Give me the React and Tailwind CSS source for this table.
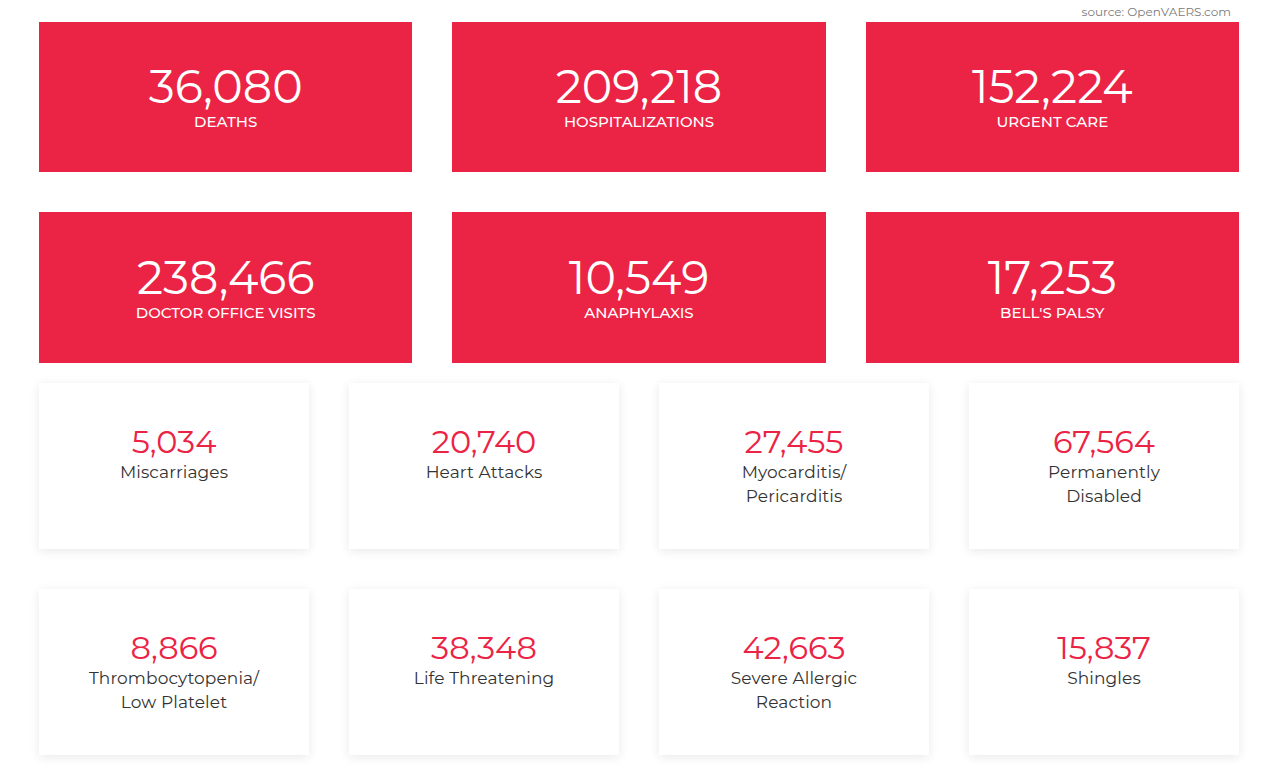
export default function App() {
  const red = [
    ["36,080", "DEATHS"],
    ["209,218", "HOSPITALIZATIONS"],
    ["152,224", "URGENT CARE"],
    ["238,466", "DOCTOR OFFICE VISITS"],
    ["10,549", "ANAPHYLAXIS"],
    ["17,253", "BELL'S PALSY"],
  ];
  const white = [
    ["5,034", ["Miscarriages"]],
    ["20,740", ["Heart Attacks"]],
    ["27,455", ["Myocarditis/", "Pericarditis"]],
    ["67,564", ["Permanently", "Disabled"]],
    ["8,866", ["Thrombocytopenia/", "Low Platelet"]],
    ["38,348", ["Life Threatening"]],
    ["42,663", ["Severe Allergic", "Reaction"]],
    ["15,837", ["Shingles"]],
  ];
  return (
    <div className="min-h-[776px] bg-white" style={{ fontFamily: "Montserrat, Inter, 'Open Sans', sans-serif" }}>
      <div className="ml-[39px] w-[1200px]">
        <div className="h-[22px] pr-[8px] text-right text-[12px] leading-[24px] text-[#7a7a7a]">
          source: OpenVAERS.com
        </div>
        <div className="grid grid-cols-3 gap-x-10">
          {red.slice(0, 3).map(([n, l]) => (
            <RedCard key={l} n={n} l={l} h="h-[150px]" />
          ))}
        </div>
        <div className="mt-10 grid grid-cols-3 gap-x-10">
          {red.slice(3).map(([n, l]) => (
            <RedCard key={l} n={n} l={l} h="h-[151px]" />
          ))}
        </div>
        <div className="mt-5 grid grid-cols-4 gap-10">
          {white.map(([n, ls]) => (
            <div
              key={n}
              className="flex h-[166px] flex-col items-center bg-white pt-[43px] text-center shadow-[0_2px_10px_rgba(0,0,0,0.09)]"
            >
              <div className="text-[32px] leading-[32px] text-[#eb2344]">{n}</div>
              <div className="mt-[2px] text-[17px] leading-[24px] tracking-[0.1px] text-[#333333]">
                {ls.map((x) => (
                  <div key={x}>{x}</div>
                ))}
              </div>
            </div>
          ))}
        </div>
      </div>
    </div>
  );
}

function RedCard({ n, l, h }) {
  return (
    <div className={`${h} flex flex-col items-center justify-center bg-[#eb2344] pt-[2px] text-white`}>
      <div className="text-[46px] leading-[46px]">{n}</div>
      <div className="mt-[2px] text-[15px] font-medium leading-[20px]">{l}</div>
    </div>
  );
}
